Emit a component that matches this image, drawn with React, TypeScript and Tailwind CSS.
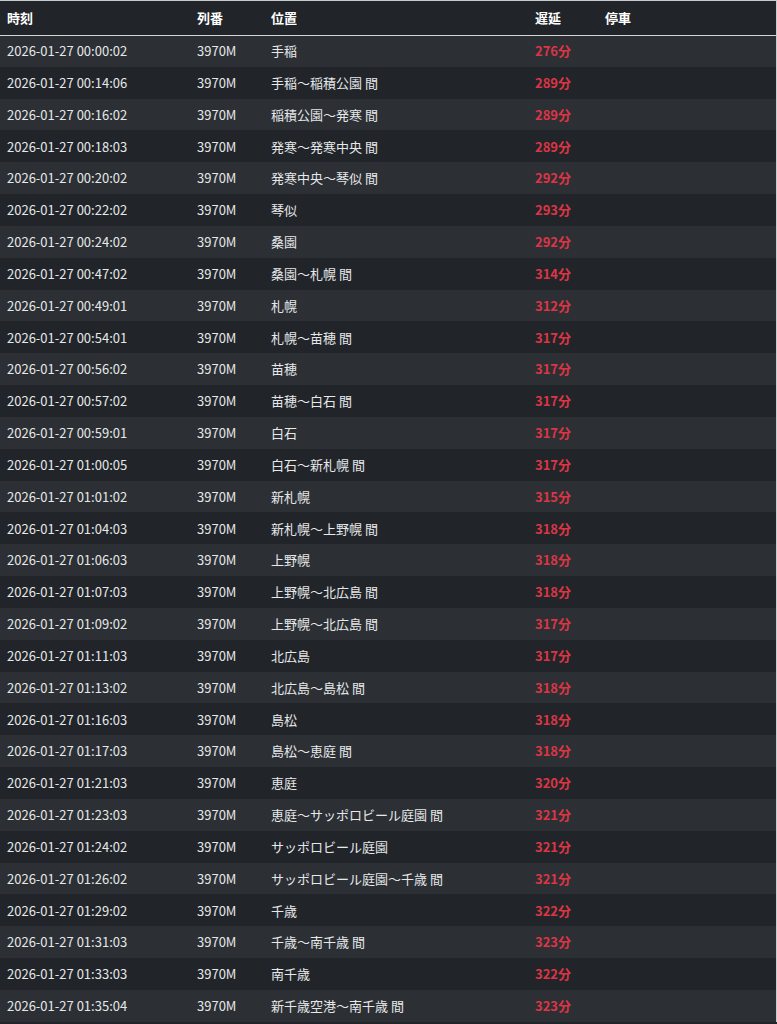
import React from 'react';

type Row = { time: string; loc: string; delay: number };

const rows: Row[] = [
  { time: '2026-01-27 00:00:02', loc: '手稲', delay: 276 },
  { time: '2026-01-27 00:14:06', loc: '手稲〜稲積公園 間', delay: 289 },
  { time: '2026-01-27 00:16:02', loc: '稲積公園〜発寒 間', delay: 289 },
  { time: '2026-01-27 00:18:03', loc: '発寒〜発寒中央 間', delay: 289 },
  { time: '2026-01-27 00:20:02', loc: '発寒中央〜琴似 間', delay: 292 },
  { time: '2026-01-27 00:22:02', loc: '琴似', delay: 293 },
  { time: '2026-01-27 00:24:02', loc: '桑園', delay: 292 },
  { time: '2026-01-27 00:47:02', loc: '桑園〜札幌 間', delay: 314 },
  { time: '2026-01-27 00:49:01', loc: '札幌', delay: 312 },
  { time: '2026-01-27 00:54:01', loc: '札幌〜苗穂 間', delay: 317 },
  { time: '2026-01-27 00:56:02', loc: '苗穂', delay: 317 },
  { time: '2026-01-27 00:57:02', loc: '苗穂〜白石 間', delay: 317 },
  { time: '2026-01-27 00:59:01', loc: '白石', delay: 317 },
  { time: '2026-01-27 01:00:05', loc: '白石〜新札幌 間', delay: 317 },
  { time: '2026-01-27 01:01:02', loc: '新札幌', delay: 315 },
  { time: '2026-01-27 01:04:03', loc: '新札幌〜上野幌 間', delay: 318 },
  { time: '2026-01-27 01:06:03', loc: '上野幌', delay: 318 },
  { time: '2026-01-27 01:07:03', loc: '上野幌〜北広島 間', delay: 318 },
  { time: '2026-01-27 01:09:02', loc: '上野幌〜北広島 間', delay: 317 },
  { time: '2026-01-27 01:11:03', loc: '北広島', delay: 317 },
  { time: '2026-01-27 01:13:02', loc: '北広島〜島松 間', delay: 318 },
  { time: '2026-01-27 01:16:03', loc: '島松', delay: 318 },
  { time: '2026-01-27 01:17:03', loc: '島松〜恵庭 間', delay: 318 },
  { time: '2026-01-27 01:21:03', loc: '恵庭', delay: 320 },
  { time: '2026-01-27 01:23:03', loc: '恵庭〜サッポロビール庭園 間', delay: 321 },
  { time: '2026-01-27 01:24:02', loc: 'サッポロビール庭園', delay: 321 },
  { time: '2026-01-27 01:26:02', loc: 'サッポロビール庭園〜千歳 間', delay: 321 },
  { time: '2026-01-27 01:29:02', loc: '千歳', delay: 322 },
  { time: '2026-01-27 01:31:03', loc: '千歳〜南千歳 間', delay: 323 },
  { time: '2026-01-27 01:33:03', loc: '南千歳', delay: 322 },
  { time: '2026-01-27 01:35:04', loc: '新千歳空港〜南千歳 間', delay: 323 },
];

export default function App() {
  return (
    <div
      className="min-h-screen bg-[#212529] text-[13px] text-[#e6e8ea]"
      style={{ fontFamily: '"Noto Sans CJK JP", "Noto Sans", sans-serif' }}
    >
      <div className="w-[777px] border-t border-r border-[#c8cbce]">
        <table className="w-[776px] table-fixed border-collapse">
          <colgroup>
            <col className="w-[190px]" />
            <col className="w-[74px]" />
            <col className="w-[264px]" />
            <col className="w-[70px]" />
            <col />
          </colgroup>
          <thead>
            <tr className="h-[34px] border-b border-[#d3d6d9] bg-[#212529] text-left font-bold text-white">
              <th className="pl-[7px]">時刻</th>
              <th className="pl-[7px]">列番</th>
              <th className="pl-[7px]">位置</th>
              <th className="pl-[7px]">遅延</th>
              <th className="pl-[7px]">停車</th>
            </tr>
          </thead>
          <tbody>
            {rows.map((r, i) => (
              <tr
                key={i}
                className={`h-[31.83px] ${i % 2 === 0 ? 'bg-[#2c3034]' : 'bg-[#212529]'}`}
              >
                <td className="pl-[7px]">{r.time}</td>
                <td className="pl-[7px]">3970M</td>
                <td className="pl-[7px]">{r.loc}</td>
                <td className="pl-[7px] font-bold text-[#dc3545]">{r.delay}分</td>
                <td className="pl-[7px]"></td>
              </tr>
            ))}
          </tbody>
        </table>
      </div>
    </div>
  );
}
